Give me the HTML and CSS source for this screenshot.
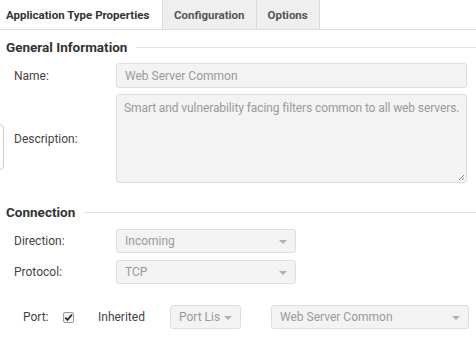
FILE: index.html
```html
<!DOCTYPE html>
<html lang="en">
<head>
  <meta charset="UTF-8">
  <title>Application Type Properties</title>
  <link rel="stylesheet" href="styles.css">
</head>
<body>
<div class="tabs">
  <div class="tab active">Application Type Properties</div>
  <div class="tab">Configuration</div>
  <div class="tab last">Options</div>
</div>

<div class="panel">
  <div class="section-title">General Information</div>

  <div class="row">
    <label class="lbl">Name:</label>
    <div class="field wide">Web Server Common</div>
  </div>

  <div class="row desc-row">
    <span class="edge"></span>
    <label class="lbl">Description:</label>
    <div class="field wide area">Smart and vulnerability facing filters common to all web servers.
      <svg class="grip" width="7" height="7" viewBox="0 0 7 7"><path d="M6 1L1 6M6 4L4 6" stroke="#888" stroke-width="1"/></svg>
    </div>
  </div>

  <div class="section-title conn">Connection</div>

  <div class="row dir-row">
    <label class="lbl">Direction:</label>
    <div class="field select mid">Incoming<span class="caret"></span></div>
  </div>

  <div class="row proto-row">
    <label class="lbl">Protocol:</label>
    <div class="field select mid">TCP<span class="caret"></span></div>
  </div>

  <div class="row port-row">
    <label class="port-lbl">Port:</label>
    <span class="check">
      <svg width="9" height="9" viewBox="0 0 9 9"><path d="M1.2 4.6L3.5 6.9L7.9 1.6" fill="none" stroke="#333" stroke-width="1.8"/></svg>
    </span>
    <span class="inh">Inherited</span>
    <div class="field select small">Port Lis<span class="caret"></span></div>
    <div class="field select server">Web Server Common<span class="caret"></span></div>
  </div>
</div>
</body>
</html>
```

FILE: styles.css
```css
body {
  margin: 0;
  font-family: Roboto, "Liberation Sans", sans-serif;
  font-size: 12px;
  color: #444;
  background: #fff;
  overflow: hidden;
}
.tabs {
  display: flex;
  height: 29px;
  border-bottom: 1px solid #dcdcdc;
}
.tab {
  display: flex;
  align-items: center;
  padding: 0 11px;
  font-size: 11.5px;
  font-weight: bold;
  white-space: nowrap;
  color: #555;
  background: #efefef;
  border-left: 1px solid #dcdcdc;
  box-sizing: border-box;
}
.tab.active {
  width: 162px;
  padding-left: 6px;
  background: #fff;
  color: #333;
  border-left: none;
}
.tab.last {
  border-right: 1px solid #dcdcdc;
  width: 64px;
}
.panel {
  position: relative;
}
.section-title {
  display: flex;
  align-items: center;
  height: 20px;
  margin: 7px 0 0 6px;
  font-size: 13.5px;
  font-weight: bold;
  color: #333;
}
.section-title::after {
  content: "";
  flex: 1;
  height: 1px;
  margin-left: 9px;
  background: #e2e2e2;
}
.section-title.conn {
  margin-top: 19px;
}
.row {
  display: flex;
  align-items: center;
  margin-top: 6px;
}
.lbl {
  width: 102px;
  padding-left: 14px;
  color: #444;
}
.field {
  box-sizing: border-box;
  background: #f3f3f3;
  border: 1px solid #dedede;
  border-radius: 3px;
  color: #9a9a9a;
  padding: 0 8px;
  height: 25px;
  display: flex;
  align-items: center;
  position: relative;
  white-space: nowrap;
}
.wide {
  width: 351px;
}
.area {
  height: 89px;
  align-items: flex-start;
  padding-top: 5px;
  padding-left: 7px;
  line-height: 16px;
  letter-spacing: -0.1px;
}
.grip {
  position: absolute;
  right: 1px;
  bottom: 1px;
}
.edge {
  position: absolute;
  left: -20px;
  top: 30px;
  width: 24px;
  height: 46px;
  box-sizing: border-box;
  border: 1px solid #cfcfcf;
  border-radius: 4px;
}
.desc-row {
  position: relative;
}
.select {
  height: 24px;
}
.mid {
  width: 180px;
}
.caret {
  position: absolute;
  right: 8px;
  top: 10px;
  border-left: 4px solid transparent;
  border-right: 4px solid transparent;
  border-top: 4px solid #b0b0b0;
}
.dir-row {
  margin-top: 7px;
}
.proto-row {
  margin-top: 7px;
}
.port-row {
  margin-top: 21px;
}
.port-lbl {
  margin-left: 23px;
  width: 40px;
  color: #444;
}
.check {
  width: 11px;
  height: 11px;
  box-sizing: border-box;
  border: 1px solid #999;
  border-radius: 2px;
  background: #f4f4f4;
  display: flex;
  align-items: center;
  justify-content: center;
}
.inh {
  margin-left: 24px;
  width: 72px;
}
.small {
  width: 71px;
}
.server {
  margin-left: 30px;
  width: 198px;
}
```
